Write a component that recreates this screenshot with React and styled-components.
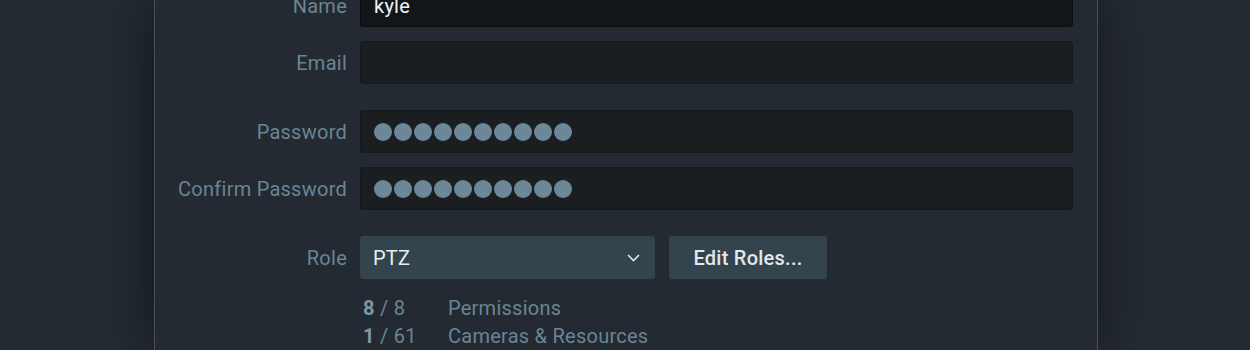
import React from 'react';
import styled, { createGlobalStyle } from 'styled-components';

const GlobalStyle = createGlobalStyle`
  html, body {
    margin: 0;
    padding: 0;
    background: #232a31;
    font-family: Roboto, "Liberation Sans", sans-serif;
  }
`;

const Page = styled.div`
  height: 350px;
  overflow: hidden;
  display: flex;
  padding-left: 154px;
`;

const Panel = styled.div`
  width: 944px;
  box-sizing: border-box;
  min-height: 100%;
  background: #232a31;
  border-left: 1px solid #4a5156;
  border-right: 1px solid #4a5156;
  box-shadow: 0 0 50px rgba(0, 0, 0, 0.45);
  padding-right: 24px;
`;

const Form = styled.div`
  display: grid;
  grid-template-columns: 192px 1fr;
  column-gap: 13px;
  margin-top: -16px;
  letter-spacing: 0.25px;
`;

const Label = styled.div`
  grid-column: 1;
  text-align: right;
  font-size: 20px;
  color: #6a8595;
  align-self: center;
  margin-top: ${({ $spaced }) => ($spaced ? '26px' : '14px')};
  &:first-child {
    margin-top: 0;
  }
`;

const Cell = styled.div`
  grid-column: 2;
  display: flex;
  gap: 14px;
  margin-top: ${({ $spaced }) => ($spaced ? '26px' : '14px')};
  ${({ $first }) => $first && 'margin-top: 0;'}
`;

const Input = styled.div`
  flex: 1;
  height: 43px;
  box-sizing: border-box;
  border-radius: 3px;
  background: ${({ $focused }) => ($focused ? '#121618' : '#1a1e21')};
  border: 1px solid ${({ $focused }) => ($focused ? '#0a0c0d' : '#16191b')};
  display: flex;
  align-items: center;
  padding-left: 13px;
  font-size: 20px;
  color: #eef2f4;
`;

const Dots = styled.div`
  display: flex;
  gap: 2px;
`;

const Dot = styled.span`
  width: 18px;
  height: 18px;
  border-radius: 50%;
  background: #6c8898;
`;

const Select = styled.div`
  width: 295px;
  height: 43px;
  box-sizing: border-box;
  border-radius: 3px;
  background: #34444d;
  display: flex;
  align-items: center;
  justify-content: space-between;
  padding: 0 15px 0 13px;
  font-size: 20px;
  color: #e9eef0;
`;

const Button = styled.div`
  width: 158px;
  height: 43px;
  box-sizing: border-box;
  border-radius: 3px;
  background: #34444d;
  display: flex;
  align-items: center;
  justify-content: center;
  font-size: 20px;
  font-weight: 500;
  color: #e3e8eb;
`;

const Stats = styled.div`
  grid-column: 2;
  display: grid;
  grid-template-columns: 85px auto;
  justify-content: start;
  margin-top: 15px;
  padding-left: 3px;
  font-size: 20px;
  line-height: 28px;
  color: #6a8595;
`;

const Count = styled.span`
  color: #6a8595;
  b {
    font-weight: 700;
    color: #7f98a7;
  }
`;

const PasswordDots = () => (
  <Dots>
    {Array.from({ length: 10 }, (x, i) => (
      <Dot key={i} />
    ))}
  </Dots>
);

const Chevron = () => (
  <svg width="13" height="8" viewBox="0 0 13 8" fill="none">
    <path d="M1 1l5.5 5.5L12 1" stroke="#dfe5e8" strokeWidth="1.6" />
  </svg>
);

const App = () => (
  <>
    <GlobalStyle />
    <Page>
      <Panel>
        <Form>
          <Label>Name</Label>
          <Cell $first>
            <Input $focused>kyle</Input>
          </Cell>

          <Label>Email</Label>
          <Cell>
            <Input />
          </Cell>

          <Label $spaced>Password</Label>
          <Cell $spaced>
            <Input>
              <PasswordDots />
            </Input>
          </Cell>

          <Label>Confirm Password</Label>
          <Cell>
            <Input>
              <PasswordDots />
            </Input>
          </Cell>

          <Label $spaced>Role</Label>
          <Cell $spaced>
            <Select>
              PTZ
              <Chevron />
            </Select>
            <Button>Edit Roles...</Button>
          </Cell>

          <Stats>
            <Count>
              <b>8</b> / 8
            </Count>
            <span>Permissions</span>
            <Count>
              <b>1</b> / 61
            </Count>
            <span>Cameras &amp; Resources</span>
          </Stats>
        </Form>
      </Panel>
    </Page>
  </>
);

export default App;
